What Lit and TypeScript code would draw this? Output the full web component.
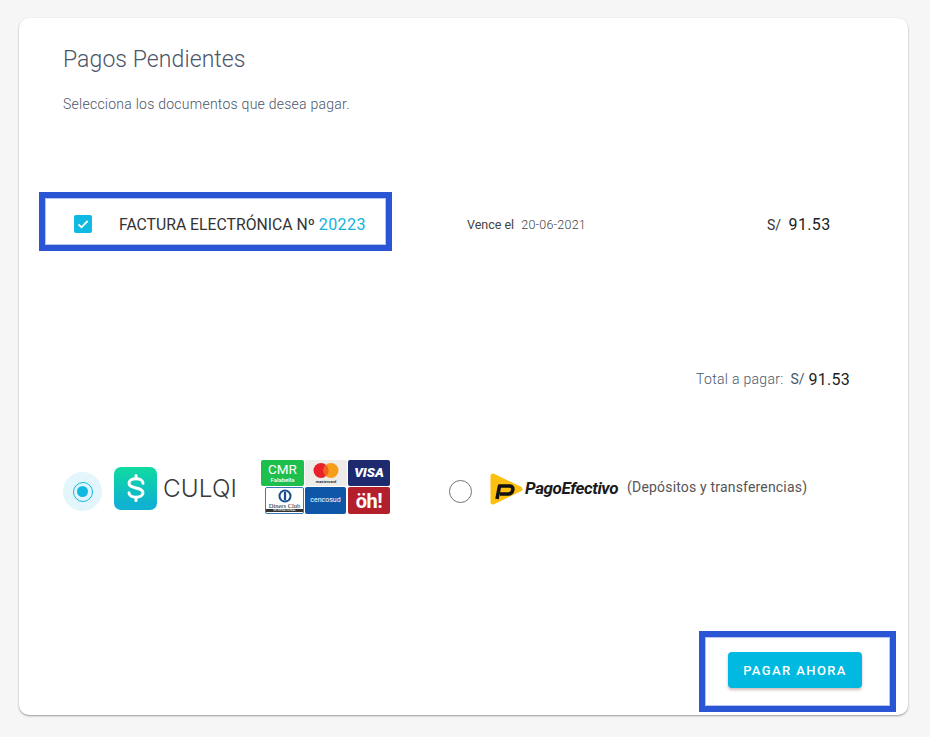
import { LitElement, html, css } from "lit";
import { customElement } from "lit/decorators.js";

@customElement("app-root")
export class AppRoot extends LitElement {
  static styles = css`
    :host { display: block; width: 930px; height: 737px; background: #f6f6f6; font-family: Roboto, sans-serif; overflow: hidden; }
    * { box-sizing: border-box; }
    .page { padding: 18px 22px 22px 19px; height: 737px; }
    .card { position: relative; height: 697px; background: #fff; border-radius: 10px; box-shadow: 0 1px 2px rgba(0,0,0,.38); padding: 28px 0 0 44px; display: flex; flex-direction: column; }
    h1 { margin: 0; font-weight: 300; font-size: 23px; line-height: 28px; color: #4a5568; letter-spacing: .08px; }
    .sub { margin: 21px 0 0; font-size: 14px; line-height: 18px; font-weight: 300; color: #4a5568; letter-spacing: .25px; }
    .doc { display: flex; align-items: center; height: 30px; margin-top: 96px; padding-left: 11px; }
    .check { width: 18px; height: 18px; border-radius: 2px; background: #0fb9e2; display: flex; align-items: center; justify-content: center; flex: none; }
    .check svg { display: block; }
    .doc-name { margin-left: 27px; width: 348px; font-size: 15.75px; color: #333; white-space: nowrap; }
    .doc-name span { color: #10b4dc; font-size: 16px; letter-spacing: .45px; }
    .due { width: 300px; font-size: 12.5px; color: #444; white-space: nowrap; }
    .due span { margin-left: 4px; font-weight: 300; color: #444; letter-spacing: .2px; }
    .amount { font-size: 14px; color: #333; white-space: nowrap; }
    .amount b { font-weight: 400; font-size: 16px; margin-left: 4px; color: #222; letter-spacing: .35px; }
    .total { margin-top: 130px; height: 20px; display: flex; justify-content: flex-end; align-items: center; padding-right: 58px; font-size: 14px; font-weight: 300; color: #4a5568; white-space: nowrap; letter-spacing: .3px; }
    .total .cur { font-weight: 400; margin-left: 7px; color: #4a5568; letter-spacing: 0; }
    .total b { font-weight: 400; font-size: 16px; color: #222; margin-left: 4px; letter-spacing: .25px; }
    .pay { display: flex; align-items: center; margin-top: 71px; height: 54px; }
    .halo { width: 39px; height: 39px; border-radius: 50%; background: #e3f6fc; display: flex; align-items: center; justify-content: center; flex: none; margin-top: 9px; }
    .radio-on { width: 20px; height: 20px; border-radius: 50%; border: 1.5px solid #0fb9e2; display: flex; align-items: center; justify-content: center; }
    .radio-on i { width: 11px; height: 11px; border-radius: 50%; background: #0fb9e2; display: block; }
    .culqi-icon { width: 43px; height: 43px; margin: 2px 0 0 12px; border-radius: 7px; background: linear-gradient(180deg, #10dba0, #0fb2d0 85%); display: flex; align-items: center; justify-content: center; flex: none; }
    .culqi-icon svg { display: block; }
    .culqi { margin: 1px 0 0 6px; width: 98px; font-family: Inter, sans-serif; font-weight: 300; font-size: 24.3px; color: #3a3a3a; letter-spacing: .1px; }
    .brands { display: grid; grid-template-columns: 43px 42px 42px; grid-template-rows: 27px 27px; column-gap: 1px; width: 129px; height: 54px; flex: none; }
    .brand { border-radius: 2px; display: flex; flex-direction: column; align-items: center; justify-content: center; color: #fff; overflow: hidden; line-height: 1; margin-bottom: 1px; }
    .cmr { background: #1fbf4d; font-weight: 400; font-size: 13.5px; }
    .cmr small { font-size: 6px; font-weight: 500; margin-top: 1px; }
    .mc { background: #eeece8; color: #333; font-size: 4px; font-weight: 700; }
    .mc svg { display: block; margin-bottom: 2px; }
    .visa { background: #1d2a6e; font-weight: 900; font-style: italic; font-size: 13.5px; }
    .diners { background: #fff; border: 1px solid #3c78b8; color: #222; font-family: "Liberation Serif", serif; font-size: 6.5px; margin: 0 0 0 4px; }
    .diners svg { display: block; }
    .diners small { font-family: Roboto, sans-serif; font-size: 3px; background: #333; color: #fff; width: 100%; text-align: center; }
    .cencosud { background: #0e56a8; font-size: 7px; margin: 0 1px 0 0; }
    .oh { background: #b3202c; font-weight: 700; font-size: 20px; letter-spacing: -.5px; margin: 0; }
    .radio-off { width: 23px; height: 23px; border-radius: 50%; border: 1.5px solid #757575; margin: 9px 0 0 59px; flex: none; }
    .pago { display: flex; align-items: center; margin: 3px 0 0 18px; flex: none; }
    .pago svg { display: block; flex: none; }
    .pago-name { margin-left: 1px; padding-bottom: 2px; font-size: 17px; font-weight: 700; font-style: italic; letter-spacing: -.4px; color: #1a1a1a; white-space: nowrap; }
    .pago-note { margin-left: 9px; padding-bottom: 4px; font-size: 14px; color: #555; white-space: nowrap; letter-spacing: .18px; }
    .actions { display: flex; justify-content: flex-end; margin-top: 138px; padding-right: 46px; }
    button { width: 134px; height: 36px; border: 0; border-radius: 4px; background: #00b9e0; color: #fff; font-family: Roboto, sans-serif; font-size: 13px; font-weight: 500; letter-spacing: 1.4px; box-shadow: 0 2px 3px rgba(120,60,60,.35); padding: 0; }
    .mark { position: absolute; border: 6px solid #2a56d6; outline: 1px solid #b5c5f0; outline-offset: -7px; pointer-events: none; }
    .mark-doc { left: 20px; top: 174px; width: 353px; height: 59px; }
    .mark-btn { left: 680px; top: 613px; width: 197px; height: 81px; }
  `;

  render() {
    return html`
      <div class="page">
        <section class="card">
          <h1>Pagos Pendientes</h1>
          <p class="sub">Selecciona los documentos que desea pagar.</p>

          <div class="doc">
            <div class="check">
              <svg width="14" height="14" viewBox="0 0 14 14"><path d="M2.5 7.3l3 3L11.6 4" fill="none" stroke="#fff" stroke-width="1.8"/></svg>
            </div>
            <div class="doc-name">FACTURA ELECTRÓNICA Nº <span>20223</span></div>
            <div class="due">Vence el <span>20-06-2021</span></div>
            <div class="amount">S/ <b>91.53</b></div>
          </div>

          <div class="total">Total a pagar: <span class="cur">S/</span><b>91.53</b></div>

          <div class="pay">
            <div class="halo"><div class="radio-on"><i></i></div></div>
            <div class="culqi-icon">
              <svg width="20" height="30" viewBox="0 0 20 30">
                <path d="M17 10.200C17 7.500 14 5.800 10 5.800S3 7.500 3 10.200c0 6.300 14 3.300 14 9.600 0 2.700-3 4.400-7 4.400s-7-1.700-7-4.400" fill="none" stroke="#fff" stroke-width="3" stroke-linecap="round"/>
                <path d="M10 2.500v3M10 24.500v3" stroke="#fff" stroke-width="3" stroke-linecap="round"/>
              </svg>
            </div>
            <div class="culqi">CULQI</div>
            <div class="brands">
              <div class="brand cmr">CMR<small>Falabella</small></div>
              <div class="brand mc">
                <svg width="26" height="15" viewBox="0 0 26 15"><circle cx="8" cy="7.500" r="7.500" fill="#e8202a"/><circle cx="18" cy="7.500" r="7.500" fill="#f59e1b"/><path d="M13 1.700a7.500 7.500 0 0 1 0 11.600a7.500 7.500 0 0 1 0-11.600z" fill="#f26122"/></svg>
                mastercard
              </div>
              <div class="brand visa">VISA</div>
              <div class="brand diners">
                <svg width="14" height="14" viewBox="0 0 15 15"><circle cx="7.500" cy="7.500" r="7" fill="#1a4f8f"/><circle cx="7.500" cy="7.500" r="4.800" fill="#fff"/><rect x="6.300" y="3" width="2.400" height="9" fill="#1a4f8f"/></svg>
                Diners Club
                <small>INTERNATIONAL</small>
              </div>
              <div class="brand cencosud">cencosud</div>
              <div class="brand oh">öh!</div>
            </div>
            <div class="radio-off"></div>
            <div class="pago">
              <svg width="34" height="32" viewBox="0 0 34 32">
                <path d="M3 3 L3 29 L30 16 Z" fill="#fdc010" stroke="#fdc010" stroke-width="5" stroke-linejoin="round"/>
                <path d="M7 26 L9.500 13 H20 C24.500 13 23.500 21 18 21 H10" fill="none" stroke="#111" stroke-width="3.600" stroke-linejoin="round"/>
              </svg>
              <span class="pago-name">PagoEfectivo</span>
              <span class="pago-note">(Depósitos y transferencias)</span>
            </div>
          </div>

          <div class="actions"><button>PAGAR AHORA</button></div>

          <div class="mark mark-doc"></div>
          <div class="mark mark-btn"></div>
        </section>
      </div>
    `;
  }
}
